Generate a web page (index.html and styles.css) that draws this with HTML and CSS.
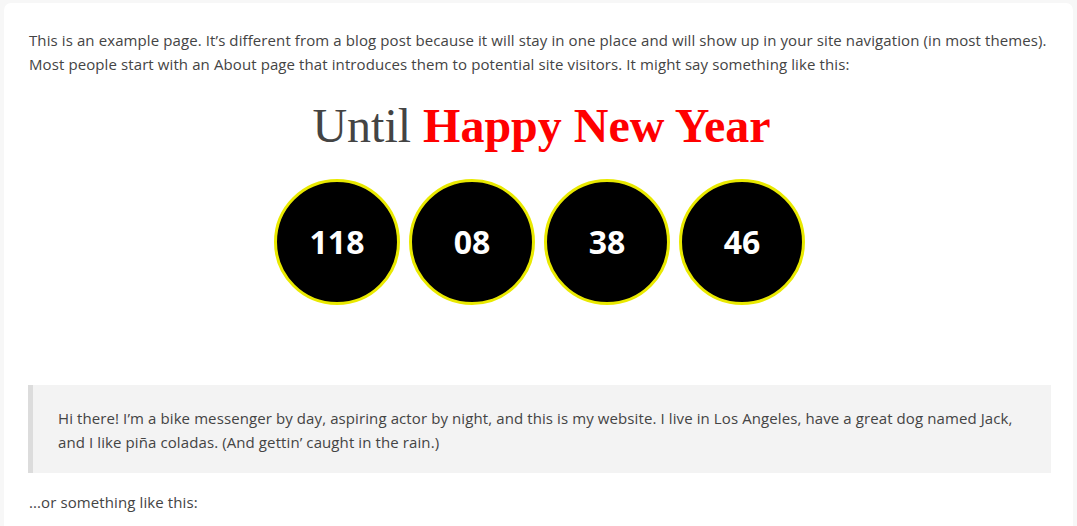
FILE: index.html
```html
<!DOCTYPE html>
<html lang="en">
<head>
<meta charset="utf-8">
<title>Sample Page</title>
<link rel="stylesheet" href="styles.css">
</head>
<body>
<main class="card">
  <p class="intro">This is an example page. It’s different from a blog post because it will stay in one place and will show up in your site navigation (in most themes). Most people start with an About page that introduces them to potential site visitors. It might say something like this:</p>
  <h2 class="countdown-title">Until <strong>Happy New Year</strong></h2>
  <div class="countdown">
    <div class="bubble">118</div>
    <div class="bubble">08</div>
    <div class="bubble">38</div>
    <div class="bubble">46</div>
  </div>
  <blockquote class="quote"><p>Hi there! I’m a bike messenger by day, aspiring actor by night, and this is my website. I live in Los Angeles, have a great dog named Jack, and I like piña coladas. (And gettin’ caught in the rain.)</p></blockquote>
  <p class="outro">...or something like this:</p>
</main>
</body>
</html>
```
FILE: styles.css
```css
html, body {
  margin: 0;
  padding: 0;
  background: #f7f7f7;
}
body {
  padding: 3px 4px 0 4px;
  font-family: "Open Sans", "Noto Sans", sans-serif;
  font-size: 15px;
  letter-spacing: 0.1px;
  line-height: 24px;
  color: #444;
}
.card {
  background: #fff;
  border-radius: 7px;
  padding: 25px 19px 30px 25px;
  min-height: 600px;
}
.intro {
  margin: 0;
}
.countdown-title {
  margin: 22px 0 0 0;
  text-align: center;
  font-family: "Liberation Serif", "Times New Roman", serif;
  font-weight: normal;
  font-size: 48px;
  letter-spacing: 0;
  line-height: 56px;
  color: #444;
}
.countdown-title strong {
  color: #f00;
  font-weight: bold;
}
.countdown {
  display: flex;
  justify-content: center;
  gap: 9px;
  margin-top: 25px;
  padding-right: 4px;
}
.bubble {
  width: 120px;
  height: 120px;
  border: 3px solid #e9e900;
  border-radius: 50%;
  background: #000;
  color: #fff;
  font-weight: bold;
  font-size: 32px;
  letter-spacing: 0;
  display: flex;
  align-items: center;
  justify-content: center;
}
.quote {
  margin: 80px 3px 0 -1px;
  background: #f3f3f3;
  border-left: 5px solid #dcdcdc;
  padding: 21px 25px 19px 25px;
}
.quote p {
  margin: 0;
}
.outro {
  margin: 17px 0 0 0;
}
```
